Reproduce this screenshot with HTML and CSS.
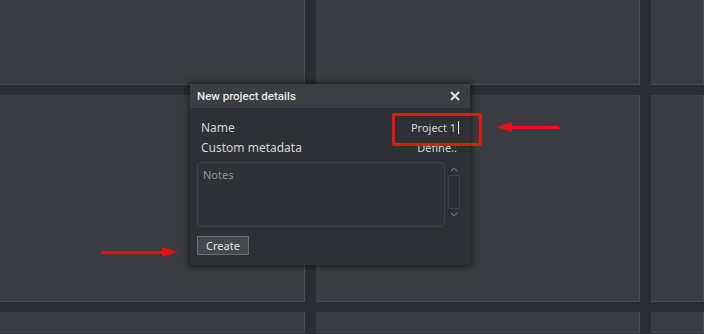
FILE: index.html
```html
<!DOCTYPE html>
<html lang="en">
<head>
    <meta charset="UTF-8">
    <title>New project details</title>
    <link rel="stylesheet" href="styles.css">
</head>
<body>
    <div class="grid">
        <div class="tile"></div><div class="tile"></div><div class="tile"></div>
        <div class="tile"></div><div class="tile"></div><div class="tile"></div>
        <div class="tile"></div><div class="tile"></div><div class="tile"></div>
    </div>

    <div class="dialog">
        <div class="title-bar">
            <span>New project details</span>
            <svg class="close" width="10" height="10" viewBox="0 0 10 10">
                <path d="M1 1L9 9M9 1L1 9" stroke="#e6e6e6" stroke-width="1.8"/>
            </svg>
        </div>
        <div class="body">
            <div class="row">
                <span>Name</span>
                <span class="value">Project 1<i class="caret"></i></span>
            </div>
            <div class="row">
                <span>Custom metadata</span>
                <span class="value">Define..</span>
            </div>
            <div class="notes-wrap">
                <div class="notes">Notes</div>
                <div class="scroll">
                    <svg width="8" height="5" viewBox="0 0 8 5"><path d="M1 4L4 1L7 4" fill="none" stroke="#6b6f73" stroke-width="1.2"/></svg>
                    <div class="track"></div>
                    <svg width="8" height="5" viewBox="0 0 8 5"><path d="M1 1L4 4L7 1" fill="none" stroke="#6b6f73" stroke-width="1.2"/></svg>
                </div>
            </div>
            <button class="create">Create</button>
        </div>
    </div>

    <div class="highlight"></div>
    <div class="arrow arrow-left"></div>
    <div class="arrow arrow-right"></div>
</body>
</html>
```

FILE: styles.css
```css
body {
    margin: 0;
    width: 704px;
    height: 334px;
    overflow: hidden;
    background: #2b2e32;
    font-family: 'Noto Sans', 'Liberation Sans', sans-serif;
    position: relative;
}

.grid {
    display: grid;
    grid-template-columns: 305px 324px 53px;
    grid-template-rows: 85px 207px 21px;
    column-gap: 11px;
    row-gap: 10px;
}

.tile {
    background: #393d41;
    border-right: 1px solid #474b4f;
    border-bottom: 1px solid #474b4f;
}

.dialog {
    position: absolute;
    left: 190px;
    top: 84px;
    width: 280px;
    height: 181px;
    background: #2d3034;
    box-shadow: 0 0 6px 2px rgba(0, 0, 0, 0.45);
    color: #d4d4d4;
    font-size: 12px;
}

.title-bar {
    height: 24px;
    background: #3b3e42;
    display: flex;
    align-items: center;
    justify-content: space-between;
    padding: 0 10px 0 7px;
    color: #e8e8e8;
    font-family: Roboto, 'Noto Sans', sans-serif;
    font-size: 11.5px;
    font-weight: 500;
}

.body {
    padding: 9px 9px 0 7px;
}

.row {
    display: flex;
    justify-content: space-between;
    height: 20px;
    align-items: center;
    padding: 0 4px 0 4px;
}

.row .value {
    display: flex;
    align-items: center;
    font-size: 11px;
}

.caret {
    display: inline-block;
    width: 1px;
    height: 13px;
    background: #e6e6e6;
    margin-left: 2px;
    margin-right: -2px;
}

.notes-wrap {
    display: flex;
    gap: 3px;
    margin-top: 5px;
}

.notes {
    width: 236px;
    height: 55px;
    border: 1px solid #3f4246;
    border-radius: 4px;
    background: #2f3236;
    color: #8e9195;
    padding: 4px 5px;
    font-size: 11px;
}

.scroll {
    width: 12px;
    display: flex;
    flex-direction: column;
    align-items: center;
    gap: 3px;
    padding-top: 5px;
}

.track {
    width: 10px;
    height: 32px;
    border: 1px solid #3e4145;
    border-radius: 2px;
}

.create {
    margin-top: 9px;
    width: 52px;
    height: 19px;
    background: #44474b;
    border: 1px solid #6d7074;
    color: #e2e2e2;
    font-family: inherit;
    font-size: 11px;
    padding: 0;
}

.highlight {
    position: absolute;
    left: 392px;
    top: 113px;
    width: 84px;
    height: 27px;
    border: 3px solid #ee1111;
    border-radius: 2px;
}

.arrow {
    position: absolute;
    height: 3px;
    background: #e81010;
}

.arrow::after {
    content: "";
    position: absolute;
    top: -4px;
    border-top: 5px solid transparent;
    border-bottom: 5px solid transparent;
}

.arrow-left {
    left: 510px;
    top: 126px;
    width: 49px;
}

.arrow-left::after {
    left: -14px;
    border-right: 16px solid #e81010;
}

.arrow-right {
    left: 102px;
    top: 251px;
    width: 62px;
}

.arrow-right::after {
    right: -14px;
    border-left: 16px solid #e81010;
}
```
